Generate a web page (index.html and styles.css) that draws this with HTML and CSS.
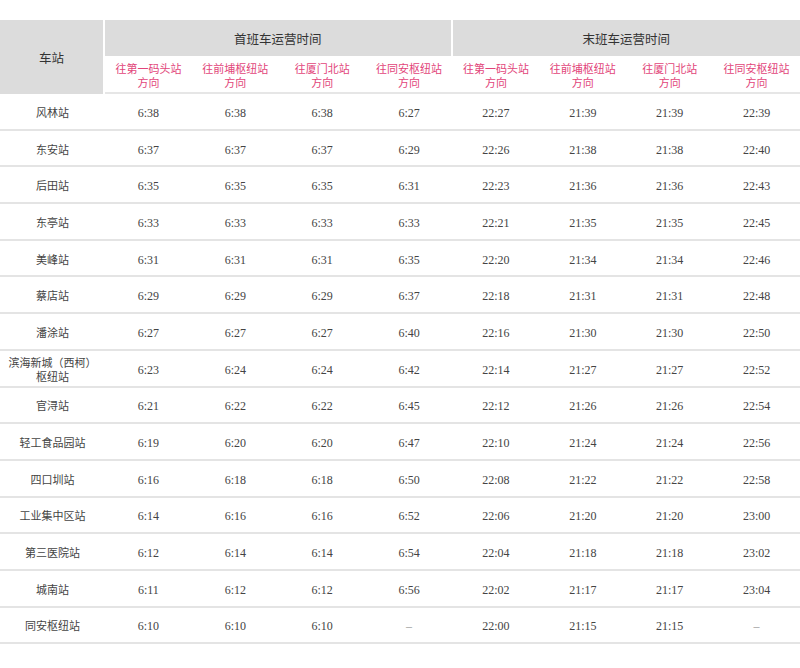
FILE: index.html
```html
<!DOCTYPE html>
<html lang="zh-CN">
<head>
<meta charset="utf-8">
<title>时刻表</title>
<link rel="stylesheet" href="styles.css">
</head>
<body>
<table class="timetable">
  <colgroup>
    <col class="col-station">
    <col><col><col><col><col><col><col><col>
  </colgroup>
  <thead>
    <tr class="head-top">
      <th class="station-head" rowspan="2">车站</th>
      <th class="group group-first" colspan="4">首班车运营时间</th>
      <th class="group" colspan="4">末班车运营时间</th>
    </tr>
    <tr class="head-dir">
      <th>往第一码头站<br>方向</th>
      <th>往前埔枢纽站<br>方向</th>
      <th>往厦门北站<br>方向</th>
      <th>往同安枢纽站<br>方向</th>
      <th>往第一码头站<br>方向</th>
      <th>往前埔枢纽站<br>方向</th>
      <th>往厦门北站<br>方向</th>
      <th>往同安枢纽站<br>方向</th>
    </tr>
  </thead>
  <tbody>
    <tr><td>风林站</td><td>6:38</td><td>6:38</td><td>6:38</td><td>6:27</td><td>22:27</td><td>21:39</td><td>21:39</td><td>22:39</td></tr>
    <tr><td>东安站</td><td>6:37</td><td>6:37</td><td>6:37</td><td>6:29</td><td>22:26</td><td>21:38</td><td>21:38</td><td>22:40</td></tr>
    <tr><td>后田站</td><td>6:35</td><td>6:35</td><td>6:35</td><td>6:31</td><td>22:23</td><td>21:36</td><td>21:36</td><td>22:43</td></tr>
    <tr><td>东亭站</td><td>6:33</td><td>6:33</td><td>6:33</td><td>6:33</td><td>22:21</td><td>21:35</td><td>21:35</td><td>22:45</td></tr>
    <tr><td>美峰站</td><td>6:31</td><td>6:31</td><td>6:31</td><td>6:35</td><td>22:20</td><td>21:34</td><td>21:34</td><td>22:46</td></tr>
    <tr><td>蔡店站</td><td>6:29</td><td>6:29</td><td>6:29</td><td>6:37</td><td>22:18</td><td>21:31</td><td>21:31</td><td>22:48</td></tr>
    <tr><td>潘涂站</td><td>6:27</td><td>6:27</td><td>6:27</td><td>6:40</td><td>22:16</td><td>21:30</td><td>21:30</td><td>22:50</td></tr>
    <tr><td>滨海新城（西柯）<br>枢纽站</td><td>6:23</td><td>6:24</td><td>6:24</td><td>6:42</td><td>22:14</td><td>21:27</td><td>21:27</td><td>22:52</td></tr>
    <tr><td>官浔站</td><td>6:21</td><td>6:22</td><td>6:22</td><td>6:45</td><td>22:12</td><td>21:26</td><td>21:26</td><td>22:54</td></tr>
    <tr><td>轻工食品园站</td><td>6:19</td><td>6:20</td><td>6:20</td><td>6:47</td><td>22:10</td><td>21:24</td><td>21:24</td><td>22:56</td></tr>
    <tr><td>四口圳站</td><td>6:16</td><td>6:18</td><td>6:18</td><td>6:50</td><td>22:08</td><td>21:22</td><td>21:22</td><td>22:58</td></tr>
    <tr><td>工业集中区站</td><td>6:14</td><td>6:16</td><td>6:16</td><td>6:52</td><td>22:06</td><td>21:20</td><td>21:20</td><td>23:00</td></tr>
    <tr><td>第三医院站</td><td>6:12</td><td>6:14</td><td>6:14</td><td>6:54</td><td>22:04</td><td>21:18</td><td>21:18</td><td>23:02</td></tr>
    <tr><td>城南站</td><td>6:11</td><td>6:12</td><td>6:12</td><td>6:56</td><td>22:02</td><td>21:17</td><td>21:17</td><td>23:04</td></tr>
    <tr><td>同安枢纽站</td><td>6:10</td><td>6:10</td><td>6:10</td><td class="none">–</td><td>22:00</td><td>21:15</td><td>21:15</td><td class="none">–</td></tr>
  </tbody>
</table>
</body>
</html>
```

FILE: styles.css
```css
html, body {
  margin: 0;
  padding: 0;
  background: #ffffff;
}

body {
  padding-top: 20px;
  font-family: "Liberation Serif", "Noto Sans CJK SC", serif;
  color: #444;
}

.timetable {
  width: 800px;
  table-layout: fixed;
  border-collapse: separate;
  border-spacing: 0;
}

.col-station {
  width: 105px;
}

.timetable th,
.timetable td {
  padding: 0;
  text-align: center;
  vertical-align: middle;
  font-weight: normal;
  box-sizing: border-box;
}

.head-top th {
  height: 36px;
  background: #dcdcdc;
  color: #333;
  font-size: 12.5px;
}

.station-head {
  border-right: 2px solid #ffffff;
  font-size: 12px;
  padding-top: 2px;
}

.group-first {
  border-right: 2px solid #ffffff;
}

.head-dir th {
  height: 38px;
  padding-top: 3px;
  color: #e2457a;
  font-size: 11px;
  line-height: 14px;
  background: #ffffff;
  border-bottom: 2px solid #e6e6e6;
}

.timetable tbody td {
  height: 36.7px;
  padding-top: 3px;
  font-size: 12px;
  line-height: 14px;
  color: #444;
  border-bottom: 2px solid #e4e4e4;
}

.timetable tbody td:first-child {
  font-size: 11px;
}

.timetable tbody td.none {
  color: #999;
}
```
